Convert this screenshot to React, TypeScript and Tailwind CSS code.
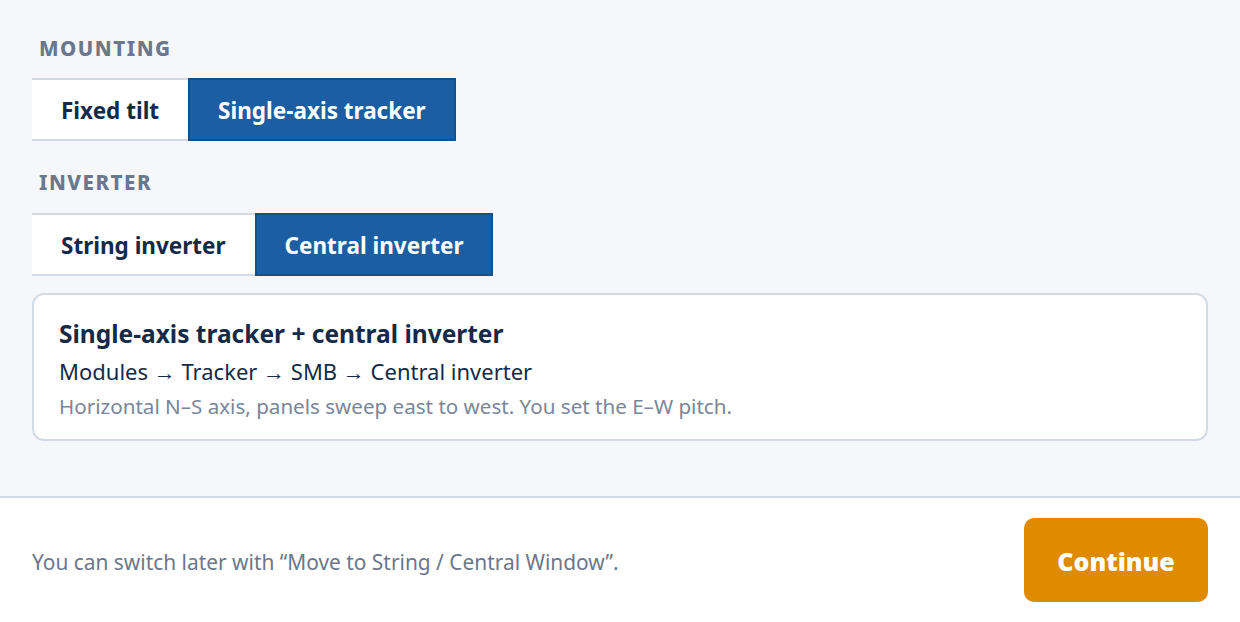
import React from "react";

const font = { fontFamily: '"Noto Sans", "Open Sans", Arial, sans-serif' };

function Segmented({ options, selected }: { options: string[]; selected: number }) {
  return (
    <div className="flex">
      {options.map((o, i) =>
        i === selected ? (
          <div
            key={o}
            className="h-[63px] px-[28px] pt-[3px] flex items-center bg-[#1b5ea3] border-2 border-[#14508a] text-white font-bold text-[22.5px]"
          >
            {o}
          </div>
        ) : (
          <div
            key={o}
            className="h-[63px] px-[29px] pt-[3px] flex items-center bg-white border-y-2 border-[#d2dae6] text-[#142a47] font-bold text-[22.5px]"
          >
            {o}
          </div>
        )
      )}
    </div>
  );
}

export default function App() {
  return (
    <div className="w-[1240px] h-[622px] flex flex-col bg-white" style={font}>
      <div className="bg-[#f5f7fb] border-b-2 border-[#d0d9e5] h-[498px] px-[32px] pt-[34px]">
        <div className="text-[20.5px] font-extrabold uppercase text-[#6b778c] tracking-[1.5px] pl-[7px] leading-[28px]">
          Mounting
        </div>
        <div className="mt-[16px]">
          <Segmented options={["Fixed tilt", "Single-axis tracker"]} selected={1} />
        </div>
        <div className="mt-[27px] text-[20.5px] font-extrabold uppercase text-[#6b778c] tracking-[1.5px] pl-[7px] leading-[28px]">
          Inverter
        </div>
        <div className="mt-[17px]">
          <Segmented options={["String inverter", "Central inverter"]} selected={1} />
        </div>
        <div className="mt-[17px] bg-white border-2 border-[#d3dbe7] rounded-[12px] px-[25px] pt-[23px] pb-[19px]">
          <div className="text-[24.5px] font-bold text-[#142a47] leading-[32px]">
            Single-axis tracker + central inverter
          </div>
          <div className="text-[22px] text-[#142a47] leading-[32px] mt-[5px]">
            Modules → Tracker → SMB → Central inverter
          </div>
          <div className="text-[20.6px] text-[#7a8699] leading-[28px] mt-[5px]">
            Horizontal N–S axis, panels sweep east to west. You set the E–W pitch.
          </div>
        </div>
      </div>
      <div className="flex-1 flex items-center justify-between px-[32px]">
        <div className="text-[20.9px] text-[#6b778c] pt-[5px]">
          You can switch later with “Move to String / Central Window”.
        </div>
        <div className="w-[184px] h-[84px] rounded-[10px] bg-[#e08a00] text-white font-black text-[25px] flex items-center justify-center pt-[3px]">
          Continue
        </div>
      </div>
    </div>
  );
}
